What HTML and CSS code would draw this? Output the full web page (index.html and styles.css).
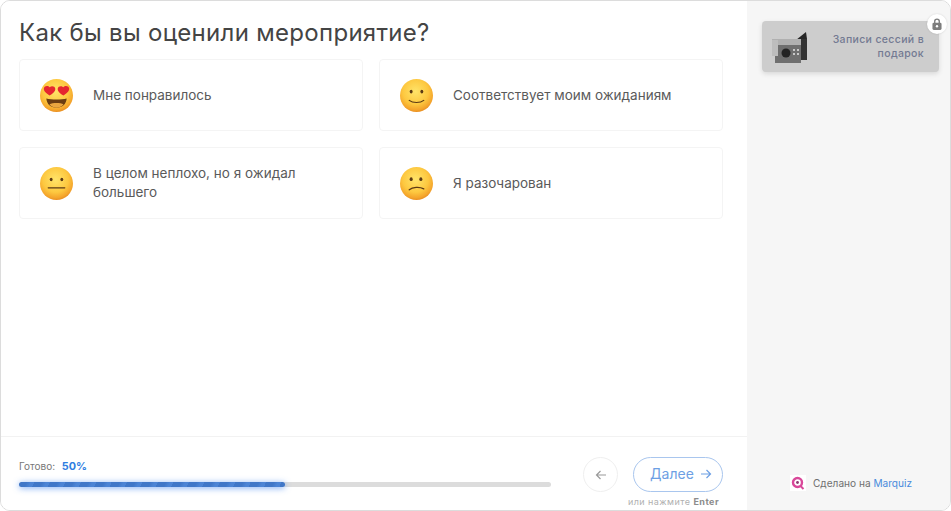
FILE: index.html
```html
<!DOCTYPE html>
<html lang="ru">
<head>
    <meta charset="UTF-8">
    <title>Marquiz</title>
    <link rel="stylesheet" href="styles.css">
</head>
<body>
    <svg class="defs" width="0" height="0">
        <defs>
            <radialGradient id="face" cx="0.47" cy="0.38" r="0.62">
                <stop offset="0" stop-color="#ffe469"/>
                <stop offset="0.62" stop-color="#fdc840"/>
                <stop offset="0.9" stop-color="#f4a42b"/>
                <stop offset="1" stop-color="#e98f22"/>
            </radialGradient>
        </defs>
    </svg>
    <div class="quiz">
        <div class="main">
            <div class="question">
                <h1>Как бы вы оценили мероприятие?</h1>
                <div class="answers">
                    <div class="answer">
                        <svg class="emoji" viewBox="0 0 34 34">
                            <circle cx="17" cy="17" r="17" fill="url(#face)"/>
                            <path d="M9.8 17 C5.5 14.5 3.4 12 4 9.4 C4.8 6.6 8.5 6.4 10 8.6 C11.5 6.6 15.2 7 15.7 9.8 C16.1 12.4 13.6 15 9.8 17Z" fill="#e5262f"/>
                            <path d="M24.2 17 C20.4 15 17.9 12.4 18.3 9.8 C18.8 7 22.5 6.6 24 8.6 C25.5 6.4 29.2 6.6 30 9.4 C30.6 12 28.5 14.5 24.2 17Z" fill="#e5262f"/>
                            <path d="M6.5 20 C12 21.4 22 21.4 27.5 20 C27 25.8 23 29.5 17 29.5 C11 29.5 7 25.8 6.5 20Z" fill="#6b3d12"/>
                            <path d="M9.8 26 C13 24.4 21 24.4 24.2 26 C22.5 28.4 20 29.5 17 29.5 C14 29.5 11.5 28.4 9.8 26Z" fill="#eaa640"/>
                        </svg>
                        <span>Мне понравилось</span>
                    </div>
                    <div class="answer">
                        <svg class="emoji" viewBox="0 0 34 34">
                            <circle cx="17" cy="17" r="17" fill="url(#face)"/>
                            <ellipse cx="11.5" cy="13" rx="1.5" ry="2" fill="#5c3a14"/>
                            <ellipse cx="22.5" cy="13" rx="1.5" ry="2" fill="#5c3a14"/>
                            <path d="M9.5 22 C13 25 21 25 24.5 22" fill="none" stroke="#5c3a14" stroke-width="1.2" stroke-linecap="round"/>
                        </svg>
                        <span>Соответствует моим ожиданиям</span>
                    </div>
                    <div class="answer">
                        <svg class="emoji" viewBox="0 0 34 34">
                            <circle cx="17" cy="17" r="17" fill="url(#face)"/>
                            <ellipse cx="11.5" cy="13" rx="1.5" ry="1.8" fill="#5c3a14"/>
                            <ellipse cx="22.5" cy="13" rx="1.5" ry="1.8" fill="#5c3a14"/>
                            <path d="M8.5 21.5 H25.5" fill="none" stroke="#5c3a14" stroke-width="1.3" stroke-linecap="round"/>
                        </svg>
                        <span>В целом неплохо, но я ожидал большего</span>
                    </div>
                    <div class="answer">
                        <svg class="emoji" viewBox="0 0 34 34">
                            <circle cx="17" cy="17" r="17" fill="url(#face)"/>
                            <ellipse cx="11.5" cy="12.5" rx="1.6" ry="2" fill="#5c3a14"/>
                            <ellipse cx="21.5" cy="12.5" rx="1.6" ry="2" fill="#5c3a14"/>
                            <path d="M9.5 23.5 C13 20.5 20 20 24.5 22.5" fill="none" stroke="#5c3a14" stroke-width="1.3" stroke-linecap="round"/>
                        </svg>
                        <span>Я разочарован</span>
                    </div>
                </div>
            </div>
            <div class="footer">
                <div class="progress">
                    <div class="progress-label">Готово: <b>50%</b></div>
                    <div class="progress-track">
                        <div class="progress-bar" style="width: 50%"></div>
                    </div>
                </div>
                <div class="nav">
                    <div class="nav-buttons">
                        <div class="btn-back">
                            <svg width="12" height="12" viewBox="0 0 12 12"><path d="M11 6H1.5M5.5 2L1.5 6L5.5 10" fill="none" stroke="#9a9a9a" stroke-width="1.2"/></svg>
                        </div>
                        <div class="btn-next">
                            Далее
                            <svg width="12" height="12" viewBox="0 0 12 12"><path d="M1 6H10.5M6.5 2L10.5 6L6.5 10" fill="none" stroke="#6d9fe4" stroke-width="1.2"/></svg>
                        </div>
                    </div>
                    <div class="hint">или нажмите <b>Enter</b></div>
                </div>
            </div>
        </div>
        <div class="side">
            <div class="bonus">
                <svg class="bonus-pic" width="36" height="34" viewBox="0 0 36 34">
                    <path d="M24 10L34 2L35 9L30 13Z" fill="#262626"/>
                    <rect x="28" y="9" width="7" height="21" fill="#333"/>
                    <rect x="3" y="14" width="26" height="19" fill="#6f6f6f"/>
                    <rect x="0" y="9" width="29" height="6" fill="#b0b0b0"/>
                    <rect x="0" y="10" width="6" height="16" fill="#bdbdbd"/>
                    <circle cx="14" cy="23" r="4.5" fill="#232323"/>
                    <path d="M21 19h2v2h-2zM25 19h2v2h-2zM21 23h2v2h-2zM25 23h2v2h-2z" fill="#c8c8c8"/>
                </svg>
                <div class="bonus-text">Записи сессий в подарок</div>
                <div class="lock">
                    <svg width="10" height="12" viewBox="0 0 11 13">
                        <path d="M3 5.5V3.6C3 2.2 4 1.2 5.5 1.2S8 2.2 8 3.6V5.5" fill="none" stroke="#7d7d7d" stroke-width="1.5"/>
                        <rect x="0.5" y="5" width="10" height="8" rx="1.5" fill="#7d7d7d"/>
                        <circle cx="5.5" cy="9" r="1.3" fill="#fff"/>
                    </svg>
                </div>
            </div>
            <div class="made">
                <span class="logo">
                    <svg width="14" height="14" viewBox="0 0 14 14">
                        <circle cx="6.5" cy="6.5" r="4.5" fill="none" stroke="#d9489a" stroke-width="2.4"/>
                        <circle cx="6.5" cy="6.5" r="1.4" fill="#8a3a70"/>
                        <path d="M9.5 10L12.5 13" stroke="#d9489a" stroke-width="2"/>
                    </svg>
                </span>
                <span>Сделано на <a class="made-link">Marquiz</a></span>
            </div>
        </div>
    </div>
</body>
</html>
```

FILE: styles.css
```css
* {
    box-sizing: border-box;
}
html, body {
    margin: 0;
    padding: 0;
}
body {
    font-family: Inter, "Open Sans", sans-serif;
    color: #444;
    background: #fff;
}
.defs {
    position: absolute;
}
.quiz {
    display: flex;
    width: 951px;
    height: 511px;
    border: 1px solid #dcdcdc;
    border-radius: 10px;
    overflow: hidden;
}
.main {
    width: 746px;
    display: flex;
    flex-direction: column;
    background: #fff;
}
.question {
    flex: 1;
    padding: 15px 24px 0 18px;
}
h1 {
    margin: 0 0 9px;
    font-size: 24px;
    line-height: 34px;
    font-weight: 400;
    letter-spacing: 0.3px;
    color: #444;
}
.answers {
    display: grid;
    grid-template-columns: 344px 344px;
    grid-auto-rows: 72px;
    gap: 16px;
}
.answer {
    display: flex;
    align-items: center;
    padding: 0 19px 0 20px;
    border: 1px solid #f4f4f4;
    border-radius: 4px;
    font-size: 13.5px;
    line-height: 19px;
    color: #5a5a5a;
}
.emoji {
    width: 33px;
    height: 33px;
    flex-shrink: 0;
    margin: 1px 20px 0 0;
}
.footer {
    height: 74px;
    display: flex;
    border-top: 1px solid #f2f2f2;
    padding: 20px 24px 0 18px;
}
.progress {
    width: 532px;
    padding-top: 2px;
}
.progress-label {
    font-size: 10px;
    line-height: 14px;
    color: #777;
}
.progress-label b {
    margin-left: 4px;
    font-size: 10.8px;
    font-weight: 700;
    color: #2f7de1;
}
.progress-track {
    height: 5px;
    margin-top: 8px;
    background: #dcdcdc;
    border-radius: 3px;
}
.progress-bar {
    height: 5px;
    border-radius: 3px;
    background: repeating-linear-gradient(115deg, #4077c8 0, #4077c8 7px, #4c84d5 11px, #4c84d5 14px);
    box-shadow: 0 1px 6px rgba(60, 130, 240, 0.7);
}
.nav {
    margin-left: auto;
    width: 140px;
}
.nav-buttons {
    display: flex;
    justify-content: space-between;
}
.btn-back {
    width: 35px;
    height: 35px;
    display: flex;
    align-items: center;
    justify-content: center;
    border: 1px solid #efefef;
    border-radius: 50%;
}
.btn-next {
    width: 90px;
    height: 35px;
    display: flex;
    align-items: center;
    justify-content: center;
    gap: 6px;
    padding: 0 0 2px 6px;
    border: 1px solid #a9c6ee;
    border-radius: 18px;
    font-size: 14px;
    letter-spacing: 0.1px;
    color: #6d9fe4;
}
.hint {
    margin-top: 4px;
    padding-right: 4px;
    text-align: right;
    font-size: 9px;
    line-height: 12px;
    letter-spacing: 0.45px;
    white-space: nowrap;
    color: #b0b0b0;
}
.hint b {
    color: #8c8c8c;
}
.side {
    flex: 1;
    display: flex;
    flex-direction: column;
    justify-content: space-between;
    padding: 20px 11px 0 15px;
    background: #f6f6f6;
}
.bonus {
    position: relative;
    height: 51px;
    display: flex;
    align-items: center;
    justify-content: space-between;
    padding: 0 15px 0 10px;
    background: #cdcdcd;
    border-radius: 4px;
    box-shadow: 0 2px 5px rgba(0, 0, 0, 0.12);
}
.bonus-pic {
    filter: blur(0.5px);
}
.bonus-text {
    width: 96px;
    text-align: right;
    font-size: 10.5px;
    line-height: 14px;
    font-weight: 500;
    letter-spacing: 0.35px;
    color: #737a92;
}
.lock {
    position: absolute;
    top: -7px;
    right: -8px;
    width: 20px;
    height: 20px;
    display: flex;
    align-items: center;
    justify-content: center;
    background: #fff;
    border-radius: 50%;
    box-shadow: 0 0 2px rgba(0, 0, 0, 0.15);
}
.made {
    display: flex;
    align-items: center;
    gap: 7px;
    margin-bottom: 19px;
    padding-left: 28px;
    font-size: 10.1px;
    color: #707070;
}
.logo {
    width: 16px;
    height: 16px;
    display: flex;
    align-items: center;
    justify-content: center;
    background: #fff;
}
.made-link {
    color: #4a8bdc;
}
```
